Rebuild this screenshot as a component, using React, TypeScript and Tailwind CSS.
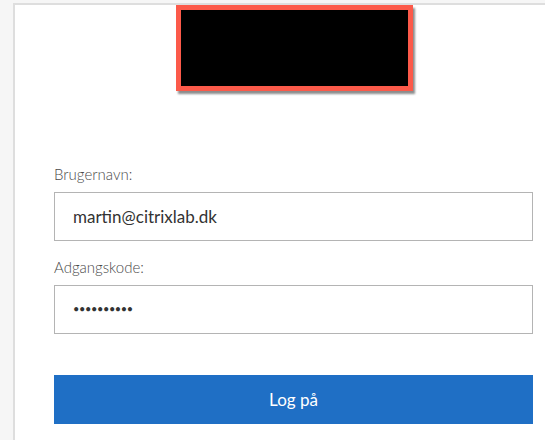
export default function App() {
  return (
    <div
      className="w-[545px] h-[440px] overflow-hidden bg-[#f6f6f6] pl-[13px] pt-[3px]"
      style={{ fontFamily: "Lato, 'Open Sans', sans-serif" }}
    >
      <div className="h-[460px] w-[560px] bg-white border-l-2 border-t-2 border-[#dedede]">
        <div className="flex pl-[161px]">
          <div className="w-[237px] h-[86px] bg-black border-[5px] border-[#fc5a4a] shadow-[2px_3px_2px_rgba(0,0,0,0.45)]" />
        </div>
        <form className="flex flex-col w-[479px] ml-[39px] mt-[73px]">
          <label className="text-[15px] font-light text-[#4a4a4a] leading-[20px]">Brugernavn:</label>
          <div className="mt-[8px] h-[49px] border border-[#b4b4b4] flex items-center pl-[18px] text-[17px] text-[#333]">
            martin@citrixlab.dk
          </div>
          <label className="mt-[16px] text-[15px] font-light text-[#4a4a4a] leading-[20px]">Adgangskode:</label>
          <div className="mt-[8px] h-[49px] border border-[#b4b4b4] flex items-center pl-[18px] text-[11px] text-[#333] tracking-[-0.4px]">
            ••••••••••
          </div>
          <button className="mt-[41px] h-[49px] bg-[#1f6fc5] text-white text-[17px]">Log på</button>
        </form>
      </div>
    </div>
  );
}
